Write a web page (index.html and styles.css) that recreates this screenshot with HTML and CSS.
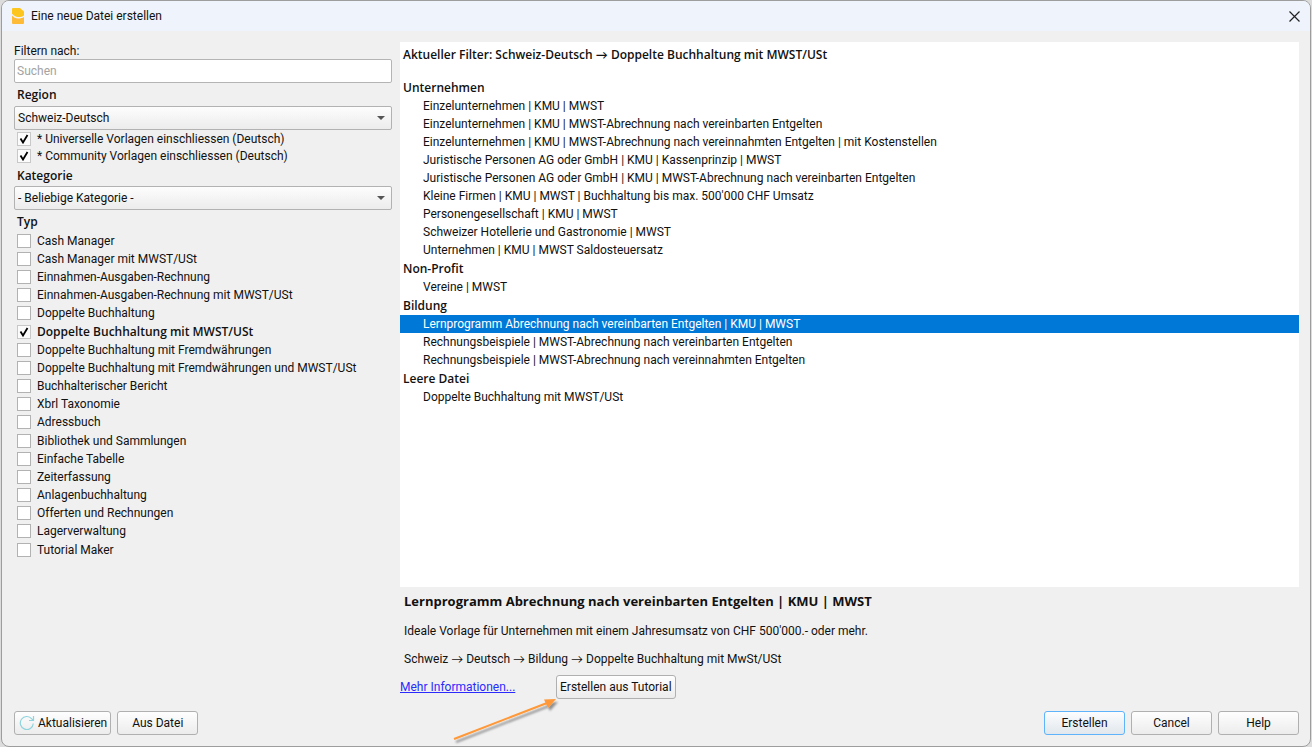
FILE: index.html
```html
<!DOCTYPE html>
<html lang="de">
<head>
<meta charset="utf-8">
<title>Eine neue Datei erstellen</title>
<link rel="stylesheet" href="styles.css">
</head>
<body>
<div class="dialog">
  <header class="titlebar">
    <svg class="logo" width="12" height="16" viewBox="0 0 12 16" aria-hidden="true"><path fill="#fdc61f" d="M1 0h7l4 3.500v4C10 8.800 8 9.200 6 9S1.500 8 0 5.500V1q0-1 1-1z"/><path fill="#fdbb38" d="M0 7.500C1.500 9.500 4 10.400 6 10.500s4.500-.5 6-1.500V15q0 1-1 1H1q-1 0-1-1z"/></svg>
    <span class="title">Eine neue Datei erstellen</span>
    <button class="close" aria-label="Schliessen"><svg width="11" height="11" viewBox="0 0 11 11"><path d="M.5.500l10 10M10.500.500l-10 10" stroke="#222" stroke-width="1.200"/></svg></button>
  </header>
  <main class="content">
    <form class="filters">
      <label class="search-label" for="search">Filtern nach:</label>
      <input class="search" id="search" type="text" placeholder="Suchen">
      <label class="heading" for="region">Region</label>
      <div class="combo"><select id="region"><option>Schweiz-Deutsch</option></select></div>
      <div class="includes">
        <label class="check"><input type="checkbox" checked>* Universelle Vorlagen einschliessen (Deutsch)</label>
        <label class="check"><input type="checkbox" checked>* Community Vorlagen einschliessen (Deutsch)</label>
      </div>
      <label class="heading category" for="category">Kategorie</label>
      <div class="combo"><select id="category"><option>- Beliebige Kategorie -</option></select></div>
      <h2 class="heading type">Typ</h2>
      <div class="types">
        <label class="check"><input type="checkbox">Cash Manager</label>
        <label class="check"><input type="checkbox">Cash Manager mit MWST/USt</label>
        <label class="check"><input type="checkbox">Einnahmen-Ausgaben-Rechnung</label>
        <label class="check"><input type="checkbox">Einnahmen-Ausgaben-Rechnung mit MWST/USt</label>
        <label class="check"><input type="checkbox">Doppelte Buchhaltung</label>
        <label class="check active"><input type="checkbox" checked>Doppelte Buchhaltung mit MWST/USt</label>
        <label class="check"><input type="checkbox">Doppelte Buchhaltung mit Fremdwährungen</label>
        <label class="check"><input type="checkbox">Doppelte Buchhaltung mit Fremdwährungen und MWST/USt</label>
        <label class="check"><input type="checkbox">Buchhalterischer Bericht</label>
        <label class="check"><input type="checkbox">Xbrl Taxonomie</label>
        <label class="check"><input type="checkbox">Adressbuch</label>
        <label class="check"><input type="checkbox">Bibliothek und Sammlungen</label>
        <label class="check"><input type="checkbox">Einfache Tabelle</label>
        <label class="check"><input type="checkbox">Zeiterfassung</label>
        <label class="check"><input type="checkbox">Anlagenbuchhaltung</label>
        <label class="check"><input type="checkbox">Offerten und Rechnungen</label>
        <label class="check"><input type="checkbox">Lagerverwaltung</label>
        <label class="check"><input type="checkbox">Tutorial Maker</label>
      </div>
    </form>
    <section class="results">
      <div class="list">
        <h1 class="current">Aktueller Filter: Schweiz-Deutsch → Doppelte Buchhaltung mit MWST/USt</h1>
        <h2 class="group">Unternehmen</h2>
        <ul class="items">
          <li>Einzelunternehmen | KMU | MWST</li>
          <li>Einzelunternehmen | KMU | MWST-Abrechnung nach vereinbarten Entgelten</li>
          <li>Einzelunternehmen | KMU | MWST-Abrechnung nach vereinnahmten Entgelten | mit Kostenstellen</li>
          <li>Juristische Personen AG oder GmbH | KMU | Kassenprinzip | MWST</li>
          <li>Juristische Personen AG oder GmbH | KMU | MWST-Abrechnung nach vereinbarten Entgelten</li>
          <li>Kleine Firmen | KMU | MWST | Buchhaltung bis max. 500'000 CHF Umsatz</li>
          <li>Personengesellschaft | KMU | MWST</li>
          <li>Schweizer Hotellerie und Gastronomie | MWST</li>
          <li>Unternehmen | KMU | MWST Saldosteuersatz</li>
        </ul>
        <h2 class="group">Non-Profit</h2>
        <ul class="items">
          <li>Vereine | MWST</li>
        </ul>
        <h2 class="group">Bildung</h2>
        <ul class="items">
          <li class="selected">Lernprogramm Abrechnung nach vereinbarten Entgelten | KMU | MWST</li>
          <li>Rechnungsbeispiele | MWST-Abrechnung nach vereinbarten Entgelten</li>
          <li>Rechnungsbeispiele | MWST-Abrechnung nach vereinnahmten Entgelten</li>
        </ul>
        <h2 class="group">Leere Datei</h2>
        <ul class="items">
          <li>Doppelte Buchhaltung mit MWST/USt</li>
        </ul>
      </div>
      <div class="detail">
        <h2 class="detail-title">Lernprogramm Abrechnung nach vereinbarten Entgelten | KMU | MWST</h2>
        <p>Ideale Vorlage für Unternehmen mit einem Jahresumsatz von CHF 500'000.- oder mehr.</p>
        <p>Schweiz → Deutsch → Bildung → Doppelte Buchhaltung mit MwSt/USt</p>
      </div>
      <div class="links">
        <div class="more"><a href="#info">Mehr Informationen...</a></div>
        <div class="tutorial">
          <button class="btn tutorial-btn">Erstellen aus Tutorial</button>
          <svg class="pointer" width="112" height="50" viewBox="0 0 112 50" aria-hidden="true">
            <defs><filter id="shade" x="-10%" y="-10%" width="130%" height="140%"><feDropShadow dx="2" dy="3" stdDeviation="1" flood-color="#000" flood-opacity=".4"/></filter></defs>
            <g filter="url(#shade)"><path d="M2 42L95 6" stroke="#ff9838" stroke-width="2"/><path d="M104 2L92 2.500L96 11z" fill="#ff9838"/></g>
          </svg>
        </div>
      </div>
    </section>
  </main>
  <footer class="footer">
    <button class="btn refresh"><svg width="16" height="16" viewBox="0 0 16 16" fill="none" stroke="#8fd3dc" stroke-width="1.200" aria-hidden="true"><path d="M14.300 8.500A6.500 6.500 0 1 1 12.800 3.800L14.300 5.300M14.500 1v4.500H10"/></svg>Aktualisieren</button>
    <button class="btn">Aus Datei</button>
    <span class="spacer"></span>
    <button class="btn primary">Erstellen</button>
    <button class="btn">Cancel</button>
    <button class="btn">Help</button>
  </footer>
</div>
</body>
</html>
```
FILE: styles.css
```css
* { box-sizing: border-box; }
body {
  margin: 0;
  background: #dcdcdc;
  color: #111;
  font: 12px/18px Roboto, Lato, sans-serif;
}
h1, h2, p, ul { margin: 0; padding: 0; font-size: 12px; }
button, input, select { font: inherit; color: inherit; }
.dialog {
  display: flex;
  flex-direction: column;
  min-height: 100vh;
  margin: 0 1px;
  border: 1px solid #9d9d9d;
  border-radius: 8px;
  background: #f0f0f0;
  overflow: hidden;
}
.titlebar {
  display: flex;
  align-items: center;
  height: 30px;
  padding: 0 9px 0 10px;
  background: #eff3fb;
}
.title { flex: 1; padding-left: 7px; }
.close { display: flex; padding: 1px; border: 0; background: none; }
.content {
  flex: 1;
  display: grid;
  grid-template-columns: 378px 1fr;
  gap: 8px;
  padding: 11px 11px 0 12px;
}
.filters { display: flex; flex-direction: column; }
.search-label { padding-top: 1px; line-height: 16px; }
.search {
  width: 100%;
  height: 24px;
  padding: 0 2px;
  border: 1px solid #b4b4b4;
  border-radius: 2px;
  background: #fff;
}
.search::placeholder { color: #a3a3a3; opacity: 1; }
.heading, .current, .group, .detail-title, .check.active {
  font-family: "Open Sans", Lato, sans-serif;
  font-weight: 600;
}
.heading { padding: 3px 3px 2px; line-height: 18px; }
.heading.category { padding-bottom: 1px; }
.heading.type { padding-bottom: 1px; }
.combo { position: relative; display: flex; }
.combo select {
  width: 100%;
  height: 24px;
  padding: 0 3px;
  border: 1px solid #b2b2b2;
  border-radius: 2px;
  background: linear-gradient(#fdfdfd, #ececec);
  appearance: none;
}
.combo::after {
  content: "";
  position: absolute;
  right: 7px;
  top: 10px;
  border: 4px solid transparent;
  border-top-color: #555;
  border-bottom: 0;
  pointer-events: none;
}
.check { display: flex; align-items: center; gap: 6px; height: 18px; padding-left: 3px; white-space: nowrap; }
.check input {
  flex: none;
  width: 14px;
  height: 14px;
  margin: 0;
  border: 1px solid #b2b2b2;
  background: #fff;
  appearance: none;
}
.check input:checked {
  border-color: #c8c8c8;
  background: #fbfbfb url("data:image/svg+xml,%3Csvg xmlns='http://www.w3.org/2000/svg' viewBox='0 0 12 12'%3E%3Cpath d='M2.500 5.500L5 9.500L9.500 2' fill='none' stroke='%23000' stroke-width='1.800'/%3E%3C/svg%3E") center / 12px 12px no-repeat;
}
.includes .check { height: 17px; }
.types .check:nth-child(6n) { height: 19px; }
.results { display: flex; flex-direction: column; min-width: 0; }
.list { flex: 1; padding: 4px 0; background: #fff; }
.current { padding: 0 3px; margin-bottom: 15px; line-height: 18px; }
.group { padding: 0 3px; line-height: 18px; }
.items + .group { line-height: 19px; }
.items { list-style: none; }
.items li { padding-left: 23px; }
.items .selected { background: #0078d7; color: #fff; }
.detail { display: grid; gap: 10px; padding: 5px 4px 7px; }
.detail-title { margin-bottom: 2px; font-size: 13px; font-weight: 700; line-height: 18px; }
.links { display: flex; align-items: center; }
.more { width: 156px; }
.more a { color: #2a2aff; }
.tutorial { position: relative; display: flex; }
.pointer { position: absolute; right: 100%; top: 22px; margin-right: -8px; }
.btn {
  min-width: 81px;
  height: 24px;
  padding: 0 3px;
  border: 1px solid #b0b0b0;
  border-radius: 3px;
  background: linear-gradient(#fefefe, #ececec);
  line-height: 20px;
  white-space: nowrap;
}
.refresh { display: flex; align-items: center; gap: 3px; padding-left: 4px; }
.primary { border-color: #5eb3fa; background: linear-gradient(#fcfdfe, #e1e7ed); }
.footer { display: flex; gap: 6px; padding: 12px 11px 11px 12px; }
.spacer { flex: 1; }
```
